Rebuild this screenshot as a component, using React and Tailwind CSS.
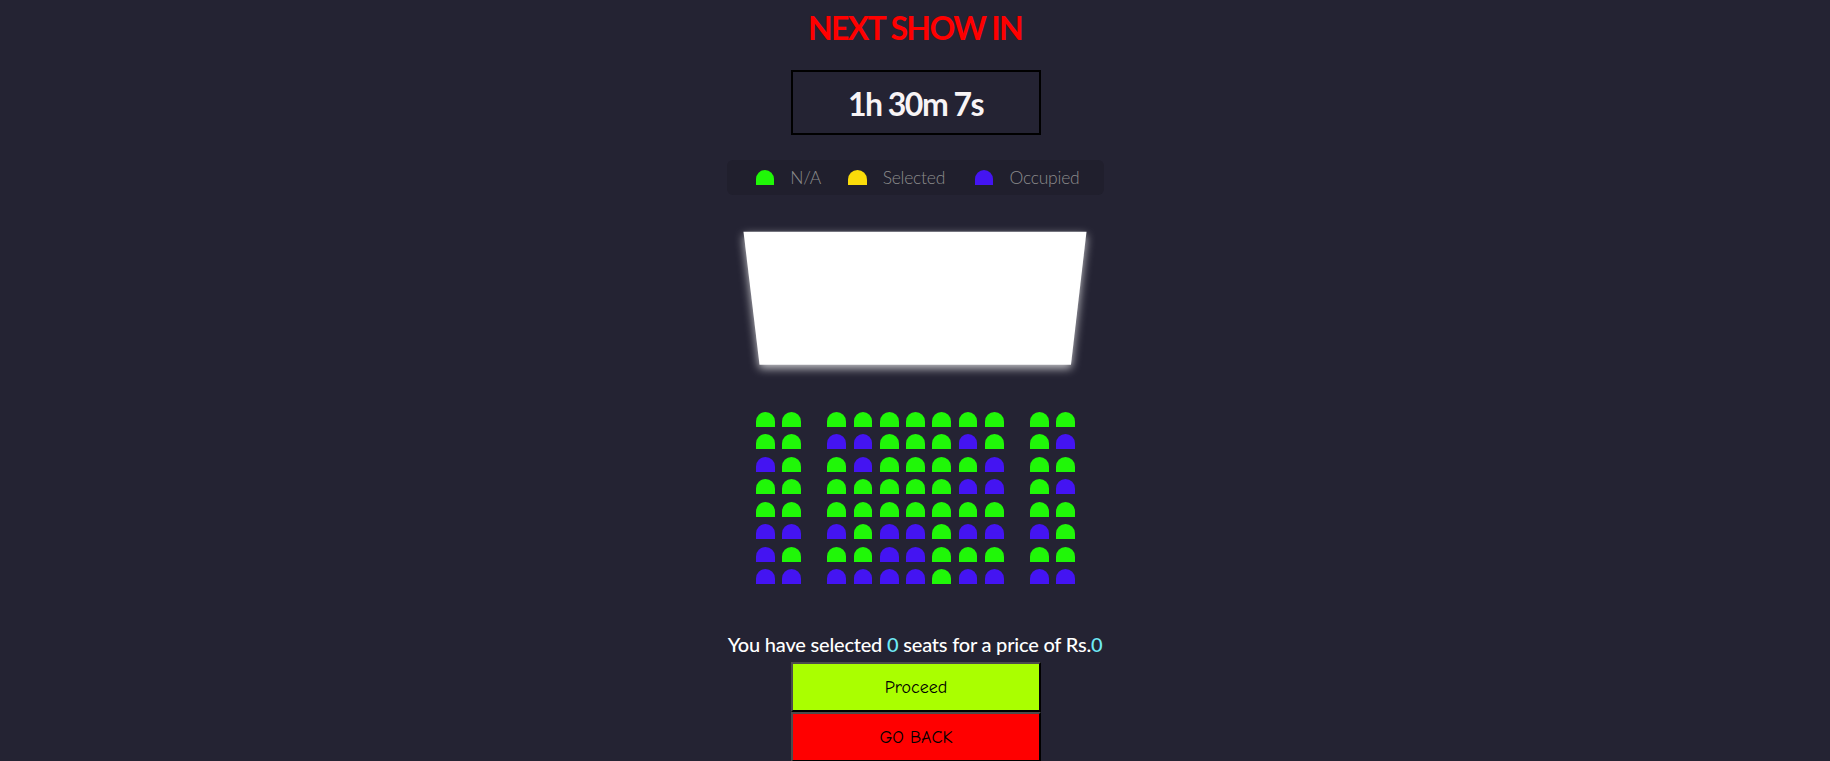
const rows = [
  "NN NNNNNNN NN",
  "NN OONNNON NO",
  "ON NONNNNO NN",
  "NN NNNNNOO NO",
  "NN NNNNNNN NN",
  "OO ONOONOO ON",
  "ON NNOONNN NN",
  "OO OOOONOO OO",
];

const colors = {
  N: "bg-[#20f708]",
  S: "bg-[#fadc0a]",
  O: "bg-[#4414f2]",
};

function Seat({ kind }) {
  return <div className={`h-[15px] w-[18.75px] shrink-0 rounded-t-[12.5px] ${colors[kind]}`} />;
}

function LegendItem({ kind, label, className }) {
  return (
    <li className={`flex items-center ${className}`}>
      <Seat kind={kind} />
      <span className="ml-[16px] whitespace-nowrap">{label}</span>
    </li>
  );
}

export default function App() {
  return (
    <main className="flex h-[761px] flex-col items-center overflow-hidden bg-[#242333] font-['Lato',sans-serif] text-white">
      <h1 className="mt-[8px] h-[40px] shrink-0 text-[32px] leading-[40px] font-bold tracking-[-1.6px] whitespace-nowrap text-[#ff0000]">
        NEXT SHOW IN
      </h1>
      <div className="mt-[22px] ml-[2px] flex h-[65px] w-[250px] shrink-0 items-center justify-center border-2 border-black text-[32px] leading-[40px] font-bold tracking-[-1.5px] text-[#f8f4f6]">
        <span className="pt-[2px] pr-px">1h 30m 7s</span>
      </div>
      <ul className="mt-[25px] ml-px flex h-[35px] w-[377px] shrink-0 items-center rounded-[6px] bg-[#201f2d] pl-[28.5px] text-[17.5px] leading-[24px] font-light tracking-[-0.25px] text-[#8c8c8c]">
        <LegendItem kind="N" label="N/A" className="w-[92.4px]" />
        <LegendItem kind="S" label="Selected" className="w-[126.8px]" />
        <LegendItem kind="O" label="Occupied" className="" />
      </ul>
      <svg className="mt-[17px] mr-[1px] h-[172px] w-[383px] shrink-0" viewBox="0 0 383 172">
        <defs>
          <filter id="glow" x="-10%" y="-20%" width="120%" height="140%">
            <feGaussianBlur stdDeviation="5" />
          </filter>
        </defs>
        <path d="M20.5 23.2H363.5L348 156.2H36.5Z" fill="#fff" opacity=".75" filter="url(#glow)" />
        <path d="M20.5 19.7H363.5L348 152.7H36.5Z" fill="#fff" />
      </svg>
      <div className="mt-[27.75px] ml-[0.9px] flex shrink-0 flex-col gap-[7.5px]">
        {rows.map((row, r) => (
          <div key={r} className="flex gap-[7.5px]">
            {row.split("").map((kind, c) =>
              kind === " " ? <div key={c} className="w-[11.25px]" /> : <Seat key={c} kind={kind} />
            )}
          </div>
        ))}
      </div>
      <p className="mt-[43.25px] h-[33px] shrink-0 text-[20px] leading-[32px] font-medium tracking-[-0.2px] whitespace-nowrap">
        You have selected <span className="text-[#6feaf6]">0</span> seats for a price of Rs.
        <span className="text-[#6feaf6]">0</span>
      </p>
      <button className="mt-[1.5px] ml-[2px] h-[50px] w-[250px] shrink-0 border-2 border-t-[#4c4c4c] border-r-black border-b-black border-l-[#4c4c4c] bg-[#aaff00] pt-px font-['Comic_Sans_MS','Comic_Neue','Lato',cursive] text-[18px] text-black">
        Proceed
      </button>
      <button className="ml-[2px] h-[50px] w-[250px] shrink-0 border-2 border-t-[#4c4c4c] border-r-black border-b-black border-l-[#4c4c4c] bg-[#ff0000] pt-px font-['Comic_Sans_MS','Comic_Neue','Lato',cursive] text-[18px] text-black">
        GO BACK
      </button>
    </main>
  );
}
